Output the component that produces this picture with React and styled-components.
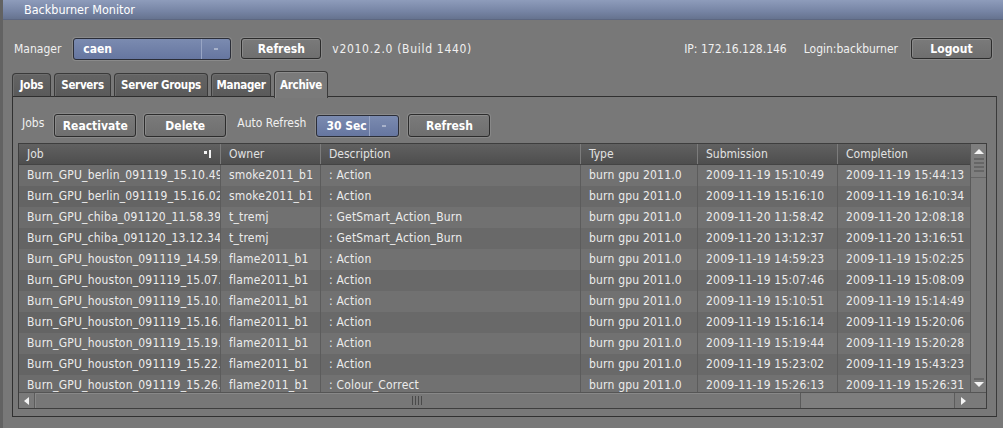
import React from "react";
import styled, { createGlobalStyle } from "styled-components";

const GlobalStyle = createGlobalStyle`
  html, body {
    margin: 0;
    padding: 0;
    background: #787878;
  }
  body {
    font-family: "DejaVu Sans Condensed", "DejaVu Sans", "Liberation Sans", sans-serif;
    font-size: 12px;
    color: #ededed;
  }
`;

const rows = [
  ["Burn_GPU_berlin_091119_15.10.49", "smoke2011_b1", ": Action", "2009-11-19 15:10:49", "2009-11-19 15:44:13"],
  ["Burn_GPU_berlin_091119_15.16.02", "smoke2011_b1", ": Action", "2009-11-19 15:16:10", "2009-11-19 16:10:34"],
  ["Burn_GPU_chiba_091120_11.58.39", "t_tremj", ": GetSmart_Action_Burn", "2009-11-20 11:58:42", "2009-11-20 12:08:18"],
  ["Burn_GPU_chiba_091120_13.12.34", "t_tremj", ": GetSmart_Action_Burn", "2009-11-20 13:12:37", "2009-11-20 13:16:51"],
  ["Burn_GPU_houston_091119_14.59.20", "flame2011_b1", ": Action", "2009-11-19 14:59:23", "2009-11-19 15:02:25"],
  ["Burn_GPU_houston_091119_15.07.44", "flame2011_b1", ": Action", "2009-11-19 15:07:46", "2009-11-19 15:08:09"],
  ["Burn_GPU_houston_091119_15.10.48", "flame2011_b1", ": Action", "2009-11-19 15:10:51", "2009-11-19 15:14:49"],
  ["Burn_GPU_houston_091119_15.16.11", "flame2011_b1", ": Action", "2009-11-19 15:16:14", "2009-11-19 15:20:06"],
  ["Burn_GPU_houston_091119_15.19.41", "flame2011_b1", ": Action", "2009-11-19 15:19:44", "2009-11-19 15:20:28"],
  ["Burn_GPU_houston_091119_15.22.59", "flame2011_b1", ": Action", "2009-11-19 15:23:02", "2009-11-19 15:43:23"],
  ["Burn_GPU_houston_091119_15.26.10", "flame2011_b1", ": Colour_Correct", "2009-11-19 15:26:13", "2009-11-19 15:26:31"],
];

const columns = [
  { title: "Job", width: 202 },
  { title: "Owner", width: 100 },
  { title: "Description", width: 260 },
  { title: "Type", width: 117 },
  { title: "Submission", width: 140 },
  { title: "Completion", width: 134 },
];

const tabs = [
  { title: "Jobs", width: 39 },
  { title: "Servers", width: 57 },
  { title: "Server Groups", width: 94 },
  { title: "Manager", width: 60 },
  { title: "Archive", width: 54, active: true },
];

const App = () => {
  return (
    <Window>
      <GlobalStyle />
      <TitleBar>Backburner Monitor</TitleBar>

      <TopBar>
        <Label>Manager</Label>
        <Combo width="158px" margin="0 10px 0 12px">
          <ComboText>caen</ComboText>
          <ComboArrow />
        </Combo>
        <Button width="80px">Refresh</Button>
        <Label margin="0 0 0 11px" spacing="0.7px">v2010.2.0 (Build 1440)</Label>
        <Spacer />
        <Label>IP: 172.16.128.146</Label>
        <Label margin="0 0 0 17px">Login:backburner</Label>
        <Button width="81px" margin="0 11px 0 13px">Logout</Button>
      </TopBar>

      <TabRow>
        {tabs.map((t) => (
          <Tab key={t.title} width={t.width + "px"} active={t.active}>
            {t.title}
          </Tab>
        ))}
      </TabRow>

      <Panel>
        <Toolbar>
          <Label margin="0 10px 5px 4px">Jobs</Label>
          <Button width="82px" tall>Reactivate</Button>
          <Button width="82px" tall margin="0 0 0 8px">Delete</Button>
          <Label margin="0 10px 5px 11px">Auto Refresh</Label>
          <Combo width="83px" margin="0 9px 0 0">
            <ComboText>30 Sec</ComboText>
            <ComboArrow />
          </Combo>
          <Button width="82px" tall>Refresh</Button>
        </Toolbar>

        <TableFrame>
          <TableArea>
            <TableBody>
              <HeaderRow>
                {columns.map((c, i) => (
                  <HeaderCell key={c.title} style={{ width: c.width }}>
                    {c.title}
                    {i === 0 && (
                      <SortIcon width="10" height="9" viewBox="0 0 10 9">
                        <rect x="0" y="1" width="3" height="3" fill="#f2f2f2" />
                        <rect x="5" y="0" width="2" height="8" fill="#f2f2f2" />
                      </SortIcon>
                    )}
                  </HeaderCell>
                ))}
              </HeaderRow>
              {rows.map((r, i) => (
                <Row key={r[0]} odd={i % 2 === 1}>
                  <Cell style={{ width: columns[0].width }} sorted>{r[0]}</Cell>
                  <Cell style={{ width: columns[1].width }}>{r[1]}</Cell>
                  <Cell style={{ width: columns[2].width }}>{r[2]}</Cell>
                  <Cell style={{ width: columns[3].width }}>burn gpu 2011.0</Cell>
                  <Cell style={{ width: columns[4].width }}>{r[3]}</Cell>
                  <Cell style={{ width: columns[5].width }}>{r[4]}</Cell>
                </Row>
              ))}
            </TableBody>
            <VScroll>
              <VThumb>
                <svg width="12" height="28" viewBox="0 0 12 28">
                  <polygon points="6,2 11,7 1,7" fill="#f4f4f4" />
                  <line x1="1" y1="12" x2="11" y2="12" stroke="#4e4e4e" />
                  <line x1="1" y1="16" x2="11" y2="16" stroke="#4e4e4e" />
                  <line x1="1" y1="20" x2="11" y2="20" stroke="#4e4e4e" />
                  <line x1="1" y1="24" x2="11" y2="24" stroke="#4e4e4e" />
                </svg>
              </VThumb>
              <VDown>
                <svg width="12" height="10" viewBox="0 0 12 10">
                  <line x1="1" y1="1" x2="11" y2="1" stroke="#4e4e4e" />
                  <polygon points="1,4 11,4 6,9" fill="#f4f4f4" />
                </svg>
              </VDown>
            </VScroll>
          </TableArea>
          <HScroll>
            <ArrowBtn>
              <svg width="6" height="8" viewBox="0 0 6 8">
                <polygon points="5,0 5,8 0,4" fill="#f4f4f4" />
              </svg>
            </ArrowBtn>
            <HThumb>
              <svg width="13" height="9" viewBox="0 0 13 9">
                <line x1="1.5" y1="0" x2="1.5" y2="9" stroke="#4a4a4a" />
                <line x1="4.5" y1="0" x2="4.5" y2="9" stroke="#4a4a4a" />
                <line x1="7.5" y1="0" x2="7.5" y2="9" stroke="#4a4a4a" />
                <line x1="10.5" y1="0" x2="10.5" y2="9" stroke="#4a4a4a" />
              </svg>
            </HThumb>
            <HTrack />
            <ArrowBtn right>
              <svg width="6" height="8" viewBox="0 0 6 8">
                <polygon points="1,0 1,8 6,4" fill="#f4f4f4" />
              </svg>
            </ArrowBtn>
          </HScroll>
        </TableFrame>
      </Panel>
    </Window>
  );
};

const Window = styled.div`
  width: 1003px;
  height: 428px;
  box-sizing: border-box;
  background: #787878;
  border-left: 3px solid #626262;
  display: flex;
  flex-direction: column;
  overflow: hidden;
`;

const TitleBar = styled.div`
  height: 19px;
  line-height: 19px;
  padding-left: 21px;
  background: linear-gradient(#8e9cbb, #7684a4 60%, #66738f);
  border-bottom: 1px solid #5d6780;
  color: #ffffff;
  font-size: 12.5px;
`;

const TopBar = styled.div`
  display: flex;
  align-items: center;
  height: 23px;
  margin-top: 17px;
  padding-left: 11px;
`;

const Label = styled.span`
  margin: ${(p) => p.margin || "0"};
  letter-spacing: ${(p) => p.spacing || "0"};
  color: #f0f0f0;
  white-space: nowrap;
  font-size: 12px;
  flex-shrink: 0;
`;

const Spacer = styled.div`
  flex: 1;
`;

const Button = styled.div`
  width: ${(p) => p.width};
  height: ${(p) => (p.tall ? "23px" : "21px")};
  margin: ${(p) => p.margin || "0"};
  flex-shrink: 0;
  box-sizing: border-box;
  display: flex;
  align-items: center;
  justify-content: center;
  border: 1px solid #2c2c2c;
  border-radius: 3px;
  background: linear-gradient(#7a7a7a, #6f6f6f);
  box-shadow: inset 1px 1px 0 #8a8a8a, 0 0 0 1px #888888;
  color: #ffffff;
  font-weight: bold;
  font-size: 12px;
`;

const Combo = styled.div`
  width: ${(p) => p.width};
  height: 22px;
  margin: ${(p) => p.margin || "0"};
  flex-shrink: 0;
  box-sizing: border-box;
  display: flex;
  align-items: stretch;
  border: 1px solid #2b2e38;
  border-radius: 3px;
  background: linear-gradient(#7b8bb0, #6676a0);
  box-shadow: 0 0 0 1px #8a8a8a;
`;

const ComboText = styled.div`
  flex: 1;
  display: flex;
  align-items: center;
  padding-left: 9px;
  color: #ffffff;
  font-weight: bold;
  font-size: 12px;
`;

const ComboArrow = styled.div`
  width: 28px;
  border-left: 1px solid #98a5c4;
  position: relative;
  &::after {
    content: "";
    position: absolute;
    left: 12px;
    top: 9px;
    width: 4px;
    height: 2px;
    background: #a8b2ca;
  }
`;

const TabRow = styled.div`
  display: flex;
  align-items: flex-end;
  gap: 3px;
  height: 27px;
  margin-top: 10px;
  padding-left: 9px;
  position: relative;
  z-index: 1;
`;

const Tab = styled.div`
  width: ${(p) => p.width};
  height: ${(p) => (p.active ? "27px" : "24px")};
  box-sizing: border-box;
  display: flex;
  align-items: center;
  justify-content: center;
  white-space: nowrap;
  border: 1px solid #3a3a3a;
  border-bottom: ${(p) => (p.active ? "none" : "1px solid #2e2e2e")};
  border-radius: 4px 4px 0 0;
  background: ${(p) => (p.active ? "#7a7a7a" : "linear-gradient(#646464, #5a5a5a)")};
  box-shadow: inset 1px 1px 0 ${(p) => (p.active ? "#8c8c8c" : "#6e6e6e")};
  color: #ffffff;
  font-weight: bold;
  font-size: 11.5px;
  letter-spacing: -0.3px;
  margin-bottom: ${(p) => (p.active ? "-1px" : "0")};
`;

const Panel = styled.div`
  margin: -1px 6px 0 9px;
  height: 321px;
  box-sizing: border-box;
  border: 1px solid #303030;
  border-right-color: #3a3a3a;
  padding: 16px 9px 6px 5px;
  display: flex;
  flex-direction: column;
`;

const Toolbar = styled.div`
  display: flex;
  align-items: center;
  height: 25px;
`;

const TableFrame = styled.div`
  margin-top: 5px;
  border: 1px solid #3e3e3e;
  display: flex;
  flex-direction: column;
  height: 266px;
  box-sizing: border-box;
`;

const TableArea = styled.div`
  flex: 1;
  display: flex;
  min-height: 0;
`;

const TableBody = styled.div`
  width: 953px;
  display: flex;
  flex-direction: column;
  background: #6c6c6c;
  overflow: hidden;
`;

const HeaderRow = styled.div`
  display: flex;
  height: 20px;
  flex-shrink: 0;
  background: linear-gradient(#616161, #4e4e4e);
  border-bottom: 1px solid #444;
`;

const HeaderCell = styled.div`
  box-sizing: border-box;
  position: relative;
  padding-left: 8px;
  line-height: 20px;
  color: #e2e2e2;
  font-size: 12px;
  border-right: 1px solid #7c7c7c;
  flex-shrink: 0;
`;

const SortIcon = styled.svg`
  position: absolute;
  right: 6px;
  top: 6px;
`;

const Row = styled.div`
  display: flex;
  height: 21px;
  flex-shrink: 0;
  background: ${(p) => (p.odd ? "#696969" : "#717171")};
`;

const Cell = styled.div`
  box-sizing: border-box;
  flex-shrink: 0;
  padding-left: 8px;
  line-height: 21px;
  white-space: nowrap;
  overflow: hidden;
  color: #ececec;
  font-size: 12px;
  letter-spacing: 0.2px;
  border-right: 1px solid #5c5c5c;
  background: ${(p) => (p.sorted ? "rgba(0,0,0,0.04)" : "transparent")};
`;

const VScroll = styled.div`
  width: 15px;
  display: flex;
  flex-direction: column;
  justify-content: space-between;
  background: #7c7c7c;
  border-left: 1px solid #5a5a5a;
`;

const VThumb = styled.div`
  height: 30px;
  display: flex;
  justify-content: center;
  padding-top: 3px;
  background: #7e7e7e;
  border-bottom: 1px solid #666;
`;

const VDown = styled.div`
  height: 12px;
  display: flex;
  justify-content: center;
  margin-bottom: 2px;
`;

const HScroll = styled.div`
  height: 15px;
  flex-shrink: 0;
  display: flex;
  align-items: stretch;
  border-top: 1px solid #555;
  background: #7a7a7a;
`;

const ArrowBtn = styled.div`
  width: 15px;
  display: flex;
  align-items: center;
  justify-content: center;
  border-left: ${(p) => (p.right ? "1px solid #5c5c5c" : "none")};
  border-right: ${(p) => (p.right ? "none" : "1px solid #5c5c5c")};
  margin-right: ${(p) => (p.right ? "16px" : "0")};
`;

const HThumb = styled.div`
  width: 765px;
  display: flex;
  align-items: center;
  justify-content: center;
  background: #777777;
  border-right: 1px solid #5a5a5a;
  box-shadow: inset 1px 1px 0 #888;
`;

const HTrack = styled.div`
  flex: 1;
  background: #7e7e7e;
`;

export default App;
